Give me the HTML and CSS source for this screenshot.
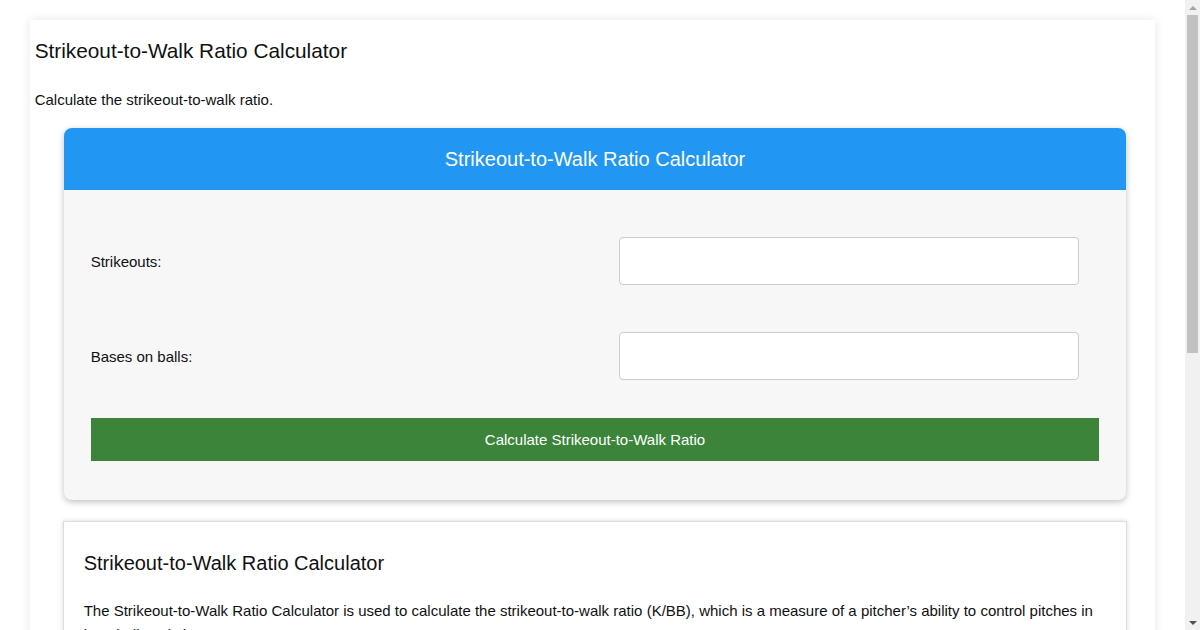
FILE: index.html
```html
<!DOCTYPE html>
<html lang="en">
<head>
<meta charset="utf-8">
<title>Strikeout-to-Walk Ratio Calculator</title>
<link rel="stylesheet" href="styles.css">
</head>
<body>
<div class="page">
  <h1 class="page-title">Strikeout-to-Walk Ratio Calculator</h1>
  <p class="page-intro">Calculate the strikeout-to-walk ratio.</p>

  <div class="calc">
    <div class="calc-header">Strikeout-to-Walk Ratio Calculator</div>
    <div class="calc-body">
      <div class="calc-rows">
        <label class="calc-label" for="k">Strikeouts:</label>
        <input class="calc-input" id="k" type="text">
        <label class="calc-label" for="bb">Bases on balls:</label>
        <input class="calc-input" id="bb" type="text">
      </div>
      <button class="calc-button" type="button">Calculate Strikeout-to-Walk Ratio</button>
    </div>
  </div>

  <div class="info">
    <h2 class="info-title">Strikeout-to-Walk Ratio Calculator</h2>
    <p class="info-text">The Strikeout-to-Walk Ratio Calculator is used to calculate the strikeout-to-walk ratio (K/BB), which is a measure of a pitcher’s ability to control pitches in baseball statistics.</p>
    <h3 class="info-sub">Formula</h3>
    <p class="info-text">K/BB = Strikeouts ÷ Bases on balls</p>
    <h3 class="info-sub">How to use</h3>
    <p class="info-text">Enter the number of strikeouts and the number of bases on balls (walks) recorded by the pitcher, then press the button to calculate the strikeout-to-walk ratio.</p>
    <h3 class="info-sub">Example</h3>
    <p class="info-text">A pitcher with 200 strikeouts and 50 walks has a strikeout-to-walk ratio of 4.00.</p>
  </div>
</div>

<div class="scrollbar" aria-hidden="true">
  <div class="scroll-arrow scroll-up"></div>
  <div class="scroll-track"><div class="scroll-thumb"></div></div>
  <div class="scroll-arrow scroll-down"></div>
</div>
</body>
</html>
```

FILE: styles.css
```css
html, body {
  margin: 0;
  padding: 0;
  background: #fff;
}

body {
  font-family: "Liberation Sans", Arial, sans-serif;
  color: #111;
  padding-right: 15px;
  overflow-x: hidden;
}

.page {
  display: flow-root;
  width: 95%;
  margin: 20px auto;
  padding: 0 5px 30px;
  box-sizing: border-box;
  background: #fff;
  box-shadow: 0 0 10px rgba(0, 0, 0, 0.1);
}

.page-title {
  margin: 19px 0 0;
  font-size: 20.8px;
  font-weight: normal;
  line-height: 24px;
}

.page-intro {
  margin: 25px 0 0;
  font-size: 15px;
  line-height: 24px;
}

.calc {
  margin: 16px 24px 0 29px;
  border-radius: 8px;
  background: #f7f7f7;
  box-shadow: 0 2px 6px rgba(0, 0, 0, 0.25);
  overflow: hidden;
}

.calc-header {
  background: #2196f3;
  color: #fff;
  text-align: center;
  font-size: 20px;
  line-height: 24px;
  padding: 19px 0;
}

.calc-body {
  padding: 47px 27px 39px;
}

.calc-rows {
  display: grid;
  grid-template-columns: 528px 460px;
  row-gap: 47px;
  align-items: center;
}

.calc-label {
  font-size: 15px;
  color: #111;
}

.calc-input {
  height: 48px;
  box-sizing: border-box;
  border: 1px solid #ccc;
  border-radius: 4px;
  background: #fff;
  font-size: 15px;
  padding: 0 10px;
}

.calc-button {
  display: block;
  width: 100%;
  height: 43px;
  margin-top: 38px;
  border: none;
  background: #3b8439;
  color: #fff;
  font-family: inherit;
  font-size: 15px;
}

.info {
  margin: 21px 23px 0 28px;
  padding: 29px 20px 30px;
  border: 1px solid #ddd;
  background: #fff;
  box-shadow: 0 0 5px rgba(0, 0, 0, 0.15);
}

.info-title {
  margin: 0 0 24px;
  font-size: 20px;
  font-weight: normal;
  line-height: 24px;
}

.info-sub {
  margin: 28px 0 12px;
  font-size: 17px;
  font-weight: normal;
  line-height: 24px;
}

.info-text {
  margin: 0;
  font-size: 15px;
  line-height: 24px;
}

/* imitation of the classic browser scrollbar shown in the screenshot */
.scrollbar {
  position: fixed;
  top: 0;
  right: 0;
  width: 15px;
  height: 100vh;
  background: #f1f1f1;
  display: flex;
  flex-direction: column;
}

.scroll-arrow {
  height: 15px;
  flex: none;
  display: flex;
  justify-content: center;
  align-items: center;
}

.scroll-up::before,
.scroll-down::before {
  content: "";
  width: 0;
  height: 0;
  border-left: 4px solid transparent;
  border-right: 4px solid transparent;
}

.scroll-up::before {
  border-bottom: 4px solid #a3a3a3;
}

.scroll-down::before {
  border-top: 4px solid #505050;
}

.scroll-track {
  flex: 1;
  padding: 0 2px;
}

.scroll-thumb {
  height: 338px;
  background: #c1c1c1;
}
```
